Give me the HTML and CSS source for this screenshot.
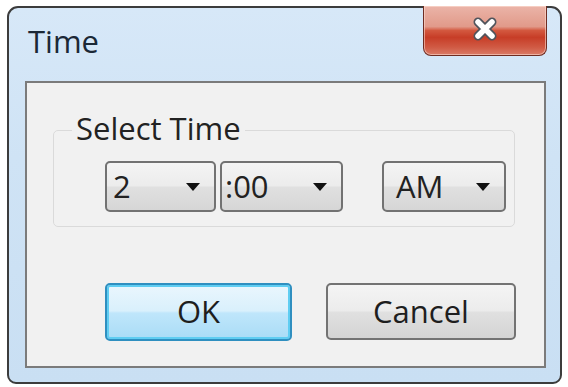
FILE: index.html
```html
<!DOCTYPE html>
<html>
<head>
<meta charset="utf-8">
<link rel="stylesheet" href="styles.css">
</head>
<body>
<div class="window">
  <div class="titlebar">
    <span class="title">Time</span>
    <div class="close">
      <svg width="28" height="26" viewBox="0 0 28 26">
        <path d="M7 6 L21 20 M21 6 L7 20" stroke="#50545c" stroke-width="9" stroke-linecap="round" fill="none"/>
        <path d="M7 6 L21 20 M21 6 L7 20" stroke="#ffffff" stroke-width="5.5" stroke-linecap="round" fill="none"/>
      </svg>
    </div>
  </div>
  <div class="client">
    <fieldset class="group">
      <legend>Select Time</legend>
      <div class="combos">
        <div class="combo hour"><span>2</span><i class="arrow"></i></div>
        <div class="combo minute"><span>:00</span><i class="arrow"></i></div>
        <div class="combo ampm"><span>AM</span><i class="arrow"></i></div>
      </div>
    </fieldset>
    <div class="buttons">
      <div class="btn ok">OK</div>
      <div class="btn cancel">Cancel</div>
    </div>
  </div>
</div>
</body>
</html>
```

FILE: styles.css
```css
html, body {
  margin: 0;
  padding: 0;
  background: #ffffff;
}
body {
  font-family: "Open Sans", "Noto Sans", sans-serif;
  font-size: 31px;
  color: #1c1c1c;
}
.window {
  margin: 6px 0 0 7px;
  width: 555px;
  height: 378px;
  box-sizing: border-box;
  border: 2px solid #3c3c3c;
  border-radius: 11px 11px 9px 9px;
  background: linear-gradient(to bottom, #d7e8f8 0%, #cfe3f5 40%, #c9dff3 100%);
  display: flex;
  flex-direction: column;
  padding: 0 14px 14px 16px;
}
.titlebar {
  height: 73px;
  display: flex;
  justify-content: space-between;
  align-items: flex-start;
  margin-left: -16px;
  margin-right: -14px;
}
.title {
  margin: 12px 0 0 19px;
  line-height: 42px;
  color: #1b2836;
}
.close {
  margin-top: -2px;
  margin-right: 13px;
  width: 124px;
  height: 50px;
  box-sizing: border-box;
  border: 1px solid #6e2c22;
  border-top: none;
  border-radius: 0 0 8px 8px;
  background: linear-gradient(to bottom, #ebb4a8 0%, #e19a8a 42%, #d3583f 50%, #c73d27 64%, #d05a44 84%, #da7b67 100%);
  display: flex;
  align-items: center;
  justify-content: center;
  box-shadow: inset 0 0 0 1px rgba(255, 225, 215, 0.55);
}
.close svg {
  display: block;
  margin-top: -3px;
}
.client {
  flex: 1;
  box-sizing: border-box;
  border: 2px solid #7b7b7b;
  background: #f1f1f1;
  display: flex;
  flex-direction: column;
}
.group {
  margin: 30px 0 0 26px;
  width: 462px;
  box-sizing: border-box;
  border: 1px solid #dadada;
  border-radius: 5px;
  padding: 13px 0 14px 0;
  min-width: 0;
}
.group legend {
  margin-left: 18px;
  padding: 0 4px 5px;
  line-height: 30px;
  color: #222222;
}
.combos {
  display: flex;
  gap: 4px;
  margin-left: 51px;
}
.combo {
  height: 51px;
  box-sizing: border-box;
  border: 2px solid #727272;
  border-radius: 5px;
  background: linear-gradient(to bottom, #f4f4f4 0%, #ececec 48%, #e0e0e0 52%, #d6d6d6 100%);
  display: flex;
  align-items: center;
  justify-content: space-between;
  padding: 0 14px 2px 6px;
  color: #222222;
}
.combo.hour { width: 111px; }
.combo.minute { width: 123px; padding-left: 3px; }
.combo.ampm { width: 124px; margin-left: 35px; padding-left: 12px; }
.arrow {
  width: 0;
  height: 0;
  border-left: 7px solid transparent;
  border-right: 7px solid transparent;
  border-top: 8px solid #111111;
  margin-top: 3px;
}
.buttons {
  display: flex;
  gap: 34px;
  margin: 56px 0 0 78px;
}
.btn {
  height: 58px;
  box-sizing: border-box;
  border-radius: 5px;
  display: flex;
  align-items: center;
  justify-content: center;
  padding-bottom: 2px;
  color: #1e1e1e;
}
.btn.ok {
  width: 187px;
  border: 2px solid #2f8fc0;
  box-shadow: inset 0 0 0 2px #5fcdf2;
  background: linear-gradient(to bottom, #eaf6fd 0%, #d9f0fc 48%, #bfe6fb 52%, #a9dcf6 100%);
}
.btn.cancel {
  width: 190px;
  height: 57px;
  border: 2px solid #737373;
  background: linear-gradient(to bottom, #f4f4f4 0%, #ececec 48%, #e0e0e0 52%, #d4d4d4 100%);
}
```
